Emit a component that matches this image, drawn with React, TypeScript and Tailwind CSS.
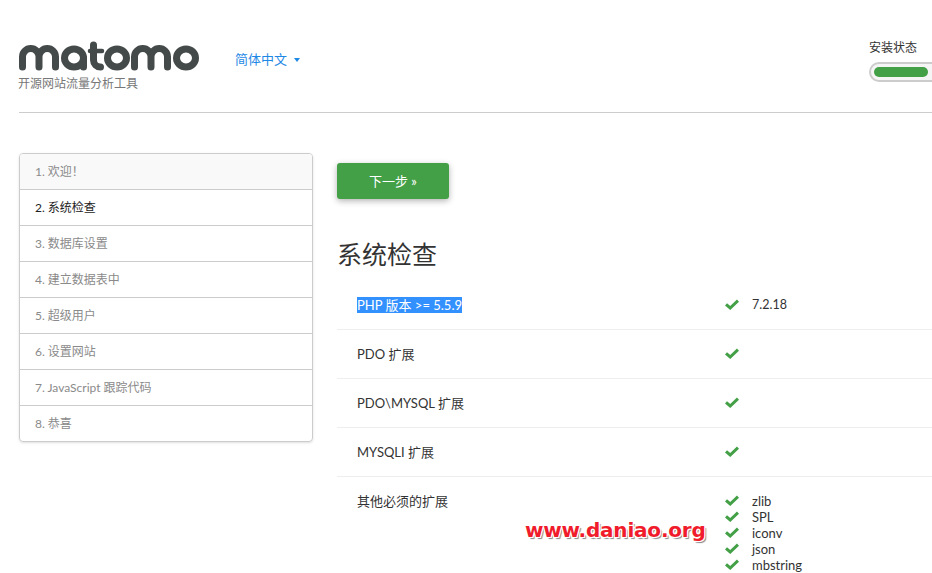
const steps = [
  { label: '1. 欢迎！', state: 'done' },
  { label: '2. 系统检查', state: 'current' },
  { label: '3. 数据库设置', state: 'todo' },
  { label: '4. 建立数据表中', state: 'todo' },
  { label: '5. 超级用户', state: 'todo' },
  { label: '6. 设置网站', state: 'todo' },
  { label: '7. JavaScript 跟踪代码', state: 'todo' },
  { label: '8. 恭喜', state: 'todo' },
];

const extensions = ['zlib', 'SPL', 'iconv', 'json', 'mbstring'];

function Check() {
  return (
    <svg width="14" height="11" viewBox="0 0 14 11" className="-mt-[2px] shrink-0">
      <path d="M1 5.3 L5.2 9 L13 1.6" fill="none" stroke="#43a047" strokeWidth="3" />
    </svg>
  );
}

function Logo() {
  return (
    <svg width="182" height="32" viewBox="0 0 182 32" className="block">
      <g fill="none" stroke="#444a49" strokeWidth="7" strokeLinecap="round" strokeLinejoin="round">
        <path d="M3.5 27 V16.75 a8.25 8.25 0 0 1 16.5 0 V27 M20 16.75 a8.25 8.25 0 0 1 16.5 0 V27" />
        <ellipse cx="55" cy="18" rx="9.5" ry="9" />
        <path d="M64.5 18 V27" />
        <path d="M74.5 5 V20 a7 7 0 0 0 7 7" />
        <ellipse cx="98" cy="18" rx="9.5" ry="9" />
        <path d="M115.5 27 V16.75 a8.25 8.25 0 0 1 16.5 0 V27 M132 16.75 a8.25 8.25 0 0 1 16.5 0 V27" />
        <ellipse cx="167" cy="18" rx="9.5" ry="9" />
      </g>
      <path d="M71 11 H83" fill="none" stroke="#444a49" strokeWidth="4.5" strokeLinecap="round" />
    </svg>
  );
}

export default function App() {
  return (
    <div className="relative h-[573px] w-[932px] overflow-hidden bg-white font-['Lato','Noto_Sans_CJK_SC',sans-serif] text-[13px] text-[#333]">
      <div className="w-[1000px] pl-[19px]">
        <header className="flex h-[113px] items-start border-b border-[#ccc]">
          <div className="w-[216px] pt-[40px]">
            <Logo />
            <p className="mt-[4px] -ml-[1px] text-[12px] leading-[16px] text-[#777]">开源网站流量分析工具</p>
          </div>
          <div className="flex items-center gap-[7px] pt-[49px] text-[13px] leading-[20px] text-[#1e88e5]">
            简体中文
            <span className="mt-px h-0 w-0 border-x-[3px] border-t-[4px] border-x-transparent border-t-[#1e88e5]" />
          </div>
          <div className="ml-[569px] pt-[39px]">
            <p className="text-[12px] leading-[18px]">安装状态</p>
            <div className="mt-[5px] h-[20px] w-[120px] rounded-full border-2 border-[#ccc] bg-[#f5f5f5] p-[3px]">
              <div className="h-[10px] w-[54px] rounded-full bg-[#43a047]" />
            </div>
          </div>
        </header>

        <div className="mt-[40px] flex items-start gap-[24px]">
          <ul className="w-[294px] overflow-hidden rounded-[4px] border border-[#ccc] shadow-sm">
            {steps.map((s) => (
              <li
                key={s.label}
                className={
                  'flex h-[36px] items-center border-b border-[#ccc] px-[15px] text-[12px] last:h-[35px] last:border-b-0 ' +
                  (s.state === 'done' ? 'bg-[#f9f9f9] text-[#8a8a8a]' : s.state === 'current' ? 'text-[#222]' : 'text-[#8a8a8a]')
                }
              >
                {s.label}
              </li>
            ))}
          </ul>

          <main className="flex-1">
            <button className="mt-[10px] h-[36px] w-[112px] rounded-[3px] bg-[#43a047] pt-px text-[13px] text-white shadow-[0_2px_6px_rgba(0,0,0,0.3)]">
              下一步 »
            </button>
            <h2 className="mt-[37px] text-[25px] leading-[36px] font-normal text-[#333]">系统检查</h2>

            <div className="mt-[9px]">
              <Row label={<span className="bg-[#3390ff] text-white">PHP 版本 &gt;= 5.5.9</span>} value="7.2.18" />
              <Row label="PDO 扩展" />
              <Row label="PDO\MYSQL 扩展" />
              <Row label="MYSQLI 扩展" />
              <div className="flex pt-[15px] pl-[20px]">
                <div className="w-[368px] leading-[18px]">其他必须的扩展</div>
                <ul className="mt-px">
                  {extensions.map((e) => (
                    <li key={e} className="flex h-[16px] items-center gap-[13px] leading-[16px]">
                      <Check />
                      {e}
                    </li>
                  ))}
                </ul>
              </div>
            </div>
          </main>
        </div>
      </div>

      <div className="absolute top-[515px] left-[525px] font-['DejaVu_Sans',sans-serif] text-[20px] leading-[30px] font-bold tracking-[-0.2px] text-[#f01c2c] [text-shadow:1px_1px_0_#fff,-1px_-1px_0_#fff,1px_-1px_0_#fff,-1px_1px_0_#fff,2px_2px_1px_#888]">
        www.daniao.org
      </div>
    </div>
  );
}

function Row({ label, value }: { label: React.ReactNode; value?: string }) {
  return (
    <div className="flex h-[49px] items-start border-b border-[#eee] pt-[15px] pl-[20px] leading-[18px]">
      <div className="w-[368px]">{label}</div>
      <div className="flex h-[18px] items-center gap-[13px] text-[12.5px]">
        <Check />
        {value}
      </div>
    </div>
  );
}
